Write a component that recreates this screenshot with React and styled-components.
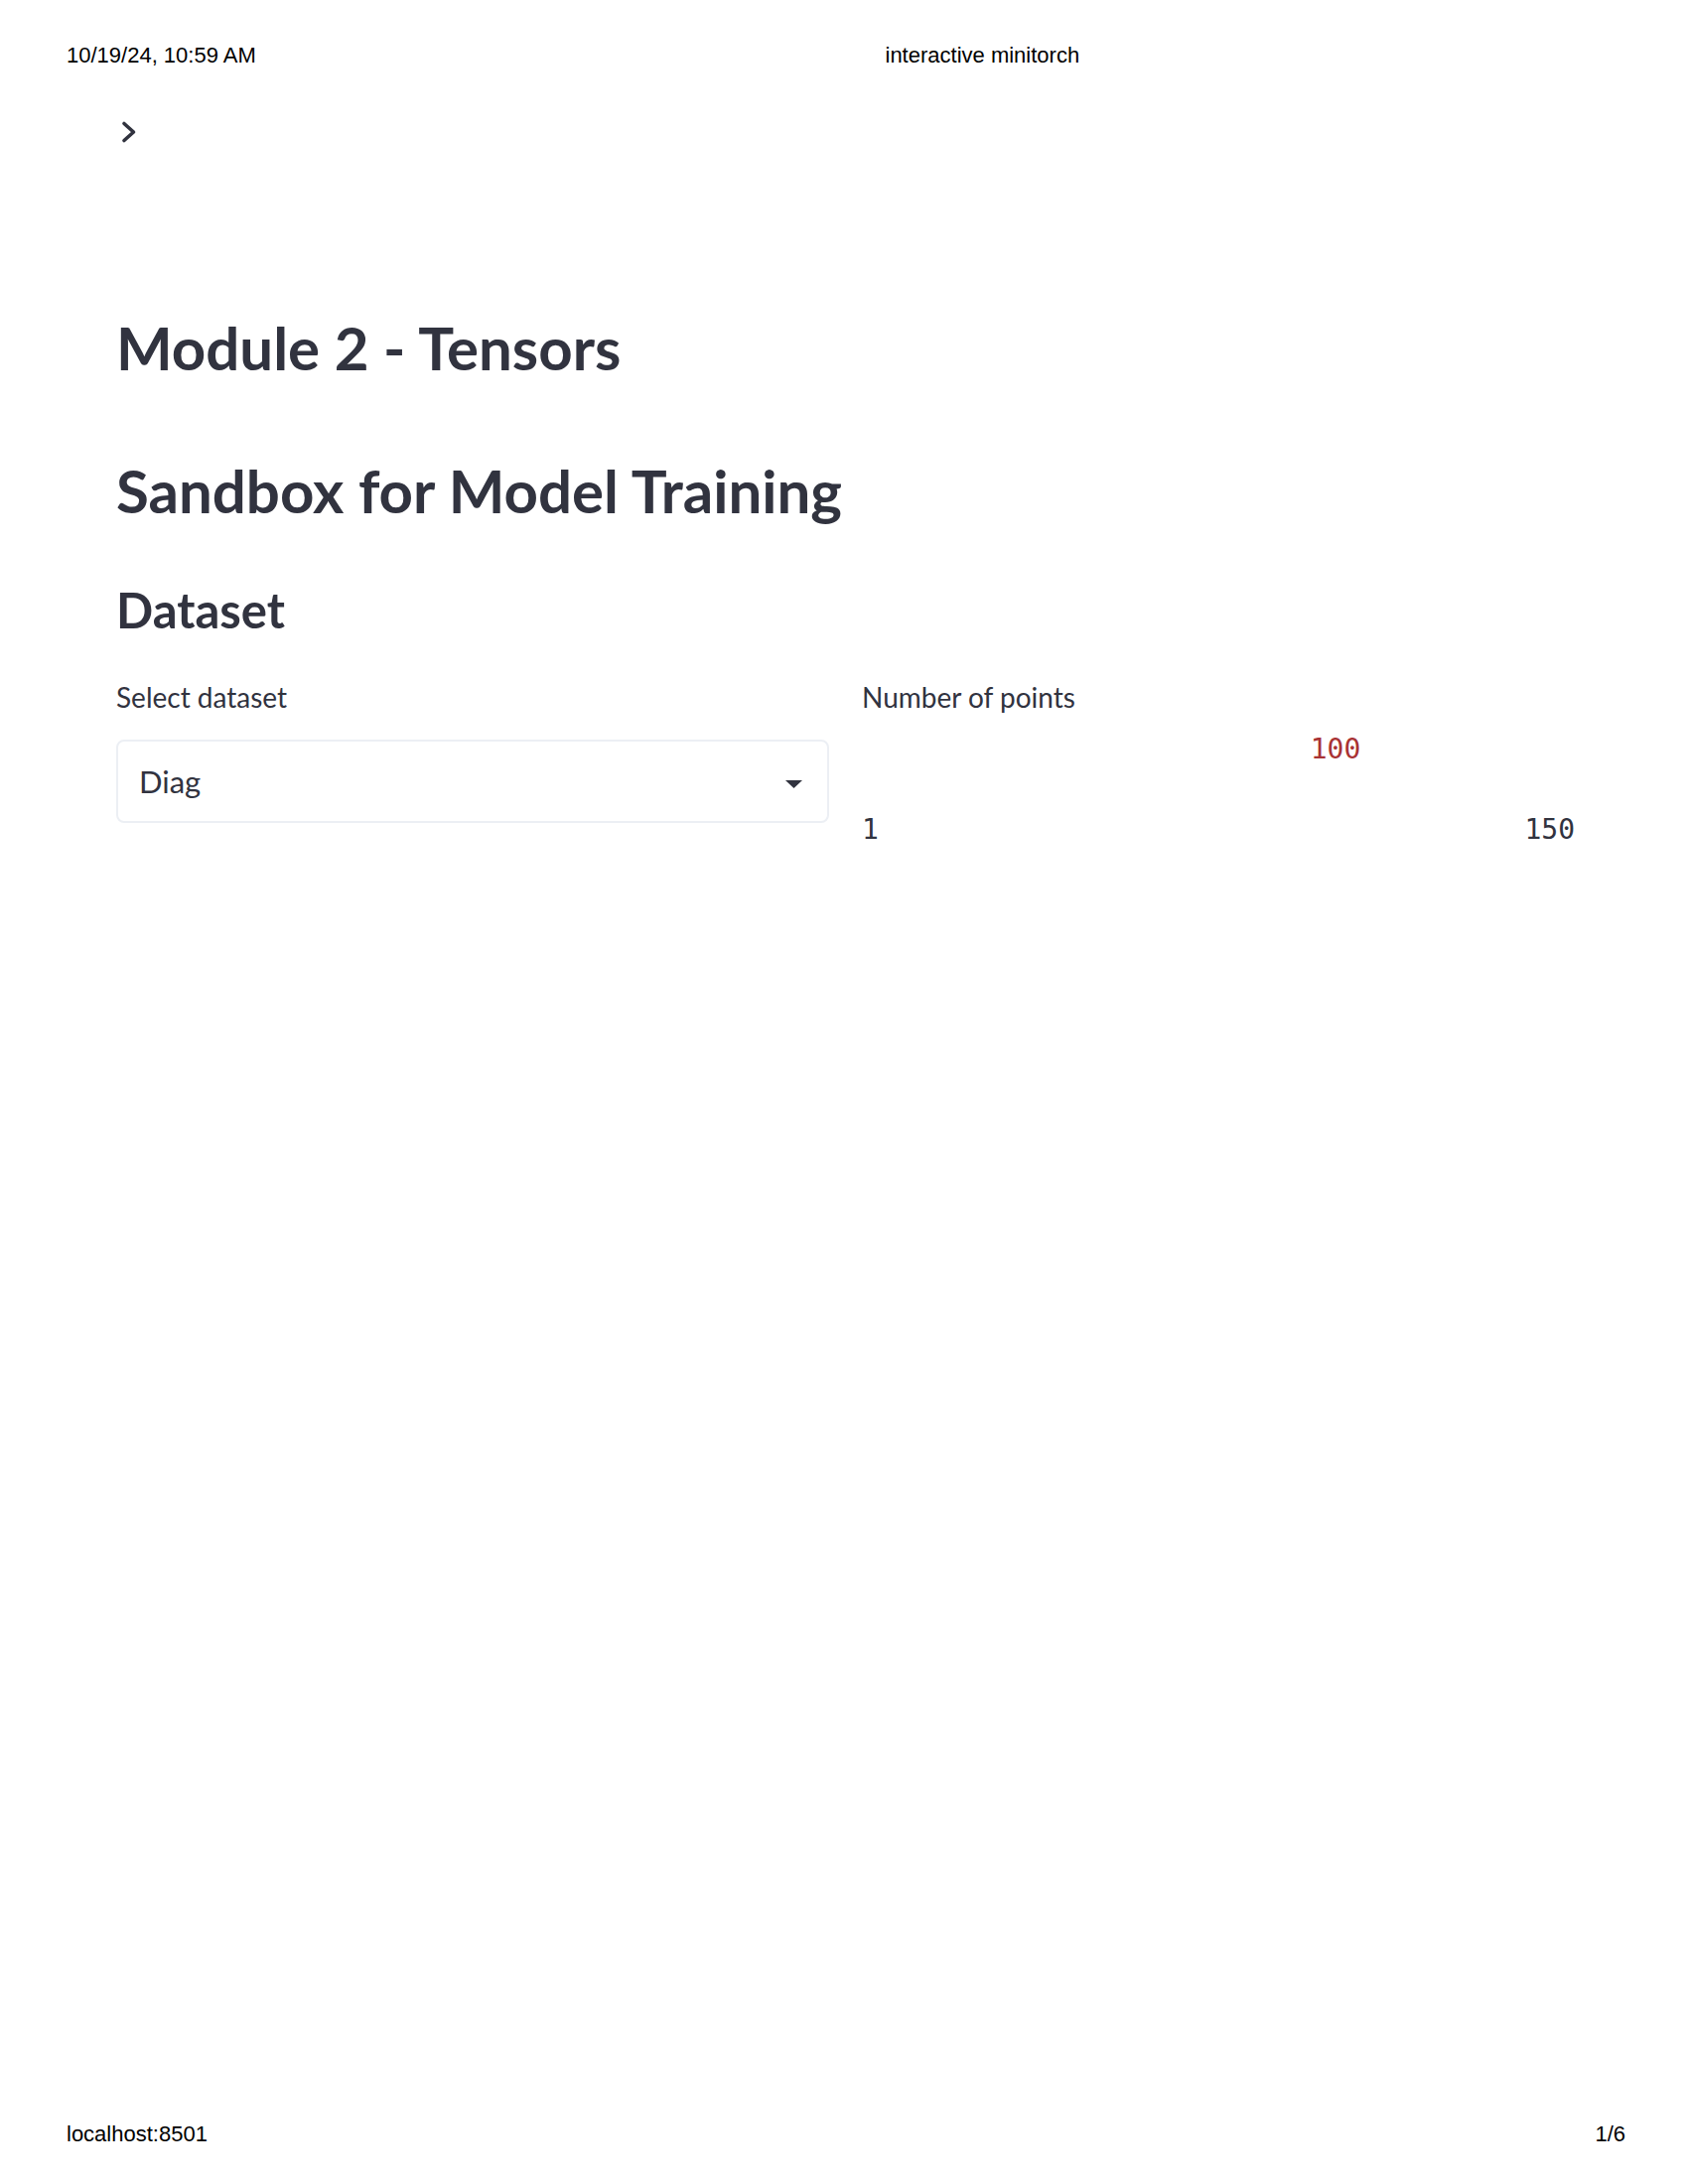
import React from "react";
import styled, { createGlobalStyle } from "styled-components";

const GlobalStyle = createGlobalStyle`
  html, body { margin: 0; padding: 0; background: #ffffff; }
  * { box-sizing: border-box; }
`;

const Page = styled.div`
  display: flex;
  flex-direction: column;
  min-height: 2200px;
  width: 1700px;
  color: #31333f;
`;

const PrintBar = styled.div`
  display: grid;
  grid-template-columns: ${(p) => p.$split || "824.5px auto"};
  justify-content: ${(p) => p.$justify || "start"};
  padding: ${(p) => p.$padding};
  font-family: "Liberation Sans", Arial, sans-serif;
  font-size: 22px;
  line-height: 25px;
  color: #000000;
  margin-top: ${(p) => (p.$pushDown ? "auto" : "0")};
`;

const SidebarToggle = styled.button`
  display: block;
  margin: 52px 0 0 120px;
  padding: 0;
  border: 0;
  background: transparent;
  width: 20px;
  height: 26px;
  color: #31333f;
  svg { display: block; }
`;

const Main = styled.main`
  width: 1586px;
  padding-left: 117px;
  font-family: Lato, "Noto Sans", sans-serif;
`;

const Title = styled.h1`
  margin: ${(p) => p.$top}px 0 0;
  font-size: 60px;
  line-height: 72px;
  font-weight: 700;
  letter-spacing: 0;
`;

const SubHeader = styled.h3`
  margin: 55px 0 0;
  font-size: 49px;
  line-height: 58px;
  font-weight: 700;
`;

const Columns = styled.div`
  display: grid;
  grid-template-columns: 718px 718px;
  column-gap: 33px;
  margin-top: 42px;
`;

const Widget = styled.div`
  display: flex;
  flex-direction: column;
`;

const Label = styled.label`
  font-size: 28px;
  line-height: 34px;
  font-weight: 400;
  color: #31333f;
`;

const SelectBox = styled.div`
  margin-top: 26px;
  height: 84px;
  border: 2px solid #eceff4;
  border-radius: 8px;
  display: flex;
  align-items: center;
  justify-content: space-between;
  padding: 0 25px 0 21px;
  font-size: 31px;
  line-height: 37px;
  color: #31333f;
  svg { display: block; margin-top: 5px; }
`;

const ValueRow = styled.div`
  position: relative;
  margin-top: 19px;
  height: 34px;
`;

const ThumbValue = styled.span`
  position: absolute;
  top: 0;
  transform: translateX(-50%);
  font-family: "DejaVu Sans Mono", "Liberation Mono", monospace;
  font-size: 28px;
  line-height: 34px;
  color: #a93234;
  white-space: nowrap;
`;

const TickRow = styled.div`
  display: flex;
  justify-content: space-between;
  margin-top: 47px;
  font-family: "DejaVu Sans Mono", "Liberation Mono", monospace;
  font-size: 28px;
  line-height: 34px;
  color: #31333f;
`;

const ChevronRight = () => (
  <svg width="20" height="26" viewBox="0 0 20 26" fill="none">
    <polyline
      points="5,4.5 14.5,13 5,21.5"
      stroke="currentColor"
      strokeWidth="3.6"
      strokeLinecap="round"
      strokeLinejoin="round"
    />
  </svg>
);

const CaretDown = () => (
  <svg width="17" height="8" viewBox="0 0 17 8">
    <polygon points="0,0 17,0 8.5,8" fill="#31333f" />
  </svg>
);

const Slider = ({ label, min, max, value }) => {
  const pct = ((value - min) / (max - min)) * 100;
  return (
    <Widget>
      <Label>{label}</Label>
      <ValueRow>
        <ThumbValue style={{ left: `${pct}%` }}>{value}</ThumbValue>
      </ValueRow>
      <TickRow>
        <span>{min}</span>
        <span>{max}</span>
      </TickRow>
    </Widget>
  );
};

export default function App() {
  return (
    <>
      <GlobalStyle />
      <Page>
        <PrintBar $padding="43px 0 0 67px">
          <span>10/19/24, 10:59 AM</span>
          <span>interactive minitorch</span>
        </PrintBar>
        <SidebarToggle aria-label="Open sidebar">
          <ChevronRight />
        </SidebarToggle>
        <Main>
          <Title $top={168}>Module 2 - Tensors</Title>
          <Title $top={72}>Sandbox for Model Training</Title>
          <SubHeader>Dataset</SubHeader>
          <Columns>
            <Widget>
              <Label>Select dataset</Label>
              <SelectBox>
                <span>Diag</span>
                <CaretDown />
              </SelectBox>
            </Widget>
            <Slider label="Number of points" min={1} max={150} value={100} />
          </Columns>
        </Main>
        <PrintBar
          $pushDown
          $split="auto auto"
          $justify="space-between"
          $padding="0 63px 38px 67px"
        >
          <span>localhost:8501</span>
          <span>1/6</span>
        </PrintBar>
      </Page>
    </>
  );
}
